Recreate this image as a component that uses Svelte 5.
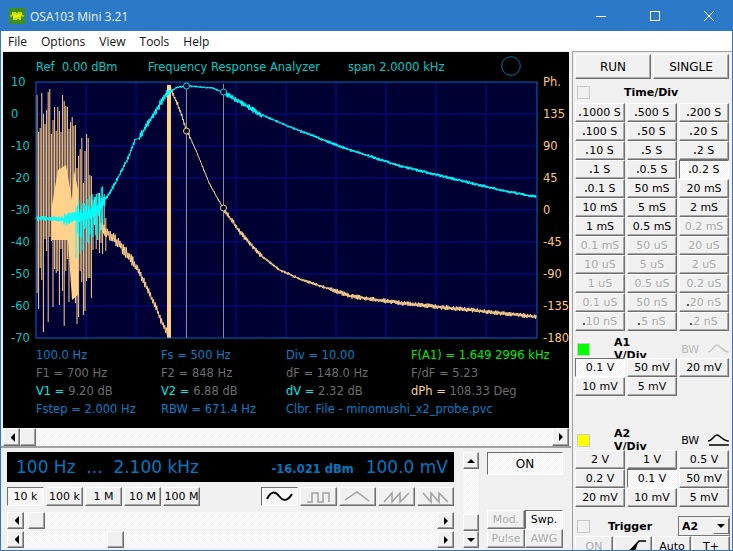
<script>
  // seeded noise so the traces are the same on every load
  let seed = 12345;
  function rnd() {
    seed = (seed * 16807) % 2147483647;
    return seed / 2147483647;
  }
  function lerp(pts, x) {
    for (let i = 1; i < pts.length; i++) {
      if (x <= pts[i][0]) {
        const a = pts[i - 1], b = pts[i];
        return a[1] + ((b[1] - a[1]) * (x - a[0])) / (b[0] - a[0]);
      }
    }
    return pts[pts.length - 1][1];
  }

  const cyanPts = [[36,218],[64,219],[84,216],[100,207],[107,197],[117,180],[128,158],[135,140],[139,138],[152,117],[167,93],[178,87],[187,86],[200,87],[212,88],[223,92],[240,102],[260,114],[290,127],[350,150],[400,166],[450,178],[500,190],[537,197]];
  const orangePts = [[100,226],[110,235],[120,245],[130,258],[136,266],[145,284],[155,305],[163,325],[170,337]];
  const phasePts = [[168,84],[178,105],[187,131],[195,148],[210,185],[223,208],[240,232],[260,255],[280,270],[300,279],[350,296],[400,303],[450,308],[500,313],[537,317]];

  function zigzag(pts, from, to, step, amp) {
    let out = [];
    let sign = 1;
    for (let x = from; x <= to; x += step) {
      const y = lerp(pts, x) + sign * amp(x) * (0.35 + rnd() * 0.65);
      out.push(x.toFixed(1) + "," + y.toFixed(1));
      sign = -sign;
    }
    return out.join(" ");
  }

  const cyanAmp = (x) => {
    if (x < 64) return 2.5;
    if (x < 84) return 7;
    if (x < 106) return 7;
    if (x < 135) return 2.5;
    if (x < 139) return 0.4;
    if (x < 170) return 4;
    if (x < 225) return 1;
    if (x < 262) return 3;
    if (x < 300) return 1.2;
    return 1.6;
  };
  const phaseAmp = (x) => {
    if (x < 190) return 2.5;
    if (x < 223) return 1.2;
    if (x < 262) return 2.8;
    if (x < 330) return 1.5;
    return 2.4;
  };

  const cyanTrace = zigzag(cyanPts, 36, 537, 0.7, cyanAmp);
  const lowTrace = zigzag(orangePts, 100, 170, 0.8, (x) => (x < 136 ? 6 : 4));
  const phaseTrace = zigzag(phasePts, 170, 537, 0.7, phaseAmp);

  // left part of the plot: spikes of the unsettled phase reading
  function spikes() {
    let d = "";
    for (let x = 37; x < 106; x += 1.6) {
      let top, bot;
      if (x < 76) {
        top = 88 + rnd() * (x < 50 ? 60 : 50);
        bot = 235 + rnd() * 100;
      } else if (x < 92) {
        top = 130 + rnd() * 60;
        bot = 260 + rnd() * 75;
      } else {
        top = 190 + rnd() * 30;
        bot = 225 + rnd() * 30;
      }
      d += `M${x.toFixed(1)} ${top.toFixed(0)}V${bot.toFixed(0)}`;
    }
    return d;
  }
  const spikePath = spikes();

  function cyanDrops() {
    let d = "";
    for (let x = 76; x < 104; x += 1.4) {
      const len = x < 92 ? 12 + rnd() * 30 : 8 + rnd() * 28;
      d += `M${x.toFixed(1)} ${lerp(cyanPts, x) - 6 - rnd() * 12}V${(lerp(cyanPts, x) + len).toFixed(0)}`;
    }
    return d;
  }
  const cyanDropPath = cyanDrops();

  const vGrid = [86, 136, 186, 236, 286, 336, 386, 436, 486];
  const hGrid = [114, 146, 178, 210, 242, 274, 306];
  const dbLabels = [["10", 82], ["0", 114], ["-10", 146], ["-20", 178], ["-30", 210], ["-40", 242], ["-50", 274], ["-60", 306], ["-70", 338]];
  const phLabels = [["135", 114], ["90", 146], ["45", 178], ["0", 210], ["-45", 242], ["-90", 274], ["-135", 306], ["-180", 338]];

  // m = small mark in front of the caption, off = greyed out
  const timeDiv = [
    ["1000 S", "m"], ["500 S", "m"], ["200 S", "m"],
    ["100 S", "m"], ["50 S", "m"], ["20 S", "m"],
    ["10 S", "m"], ["5 S", "m"], ["2 S", "m"],
    ["1 S", "m"], ["0.5 S", "m"], ["0.2 S", "m on"],
    ["0.1 S", "m"], ["50 mS", ""], ["20 mS", ""],
    ["10 mS", ""], ["5 mS", ""], ["2 mS", ""],
    ["1 mS", ""], ["0.5 mS", ""], ["0.2 mS", "off"],
    ["0.1 mS", "off"], ["50 uS", "off"], ["20 uS", "off"],
    ["10 uS", "off"], ["5 uS", "off"], ["2 uS", "off"],
    ["1 uS", "off"], ["0.5 uS", "off"], ["0.2 uS", "off"],
    ["0.1 uS", "off"], ["50 nS", "off"], ["20 nS", "m off"],
    ["10 nS", "m off"], ["5 nS", "m off"], ["2 nS", "m off"]
  ];
  const a1Div = [["0.1 V", "on"], ["50 mV", ""], ["20 mV", ""], ["10 mV", ""], ["5 mV", ""]];
  const a2Div = [["2 V", ""], ["1 V", ""], ["0.5 V", ""], ["0.2 V", ""], ["0.1 V", "on"], ["50 mV", ""], ["20 mV", ""], ["10 mV", ""], ["5 mV", ""]];
  const ranges = ["10 k", "100 k", "1 M", "10 M", "100 M"];
  const waves = [
    "M4 11 C8 3 12 3 16 8 S24 14 29 6",
    "M5 14H10V5H16V14H21V5H27V14",
    "M4 12L16 4L28 13",
    "M4 14L12 5V14L20 5V14L29 5",
    "M4 5L12 14V5L20 14V5L29 14"
  ];
</script>

{#snippet dbtn(label, flags)}
  <button class="btn {flags}">
    {#if flags.includes("m")}<i class="mark"></i>{/if}{label}
  </button>
{/snippet}

{#snippet hbar(cls)}
  <div class="hbar {cls}">
    <span class="arrow-btn"><i class="tri left"></i></span>
    <span class="thumb"></span>
    <span class="arrow-btn end"><i class="tri right"></i></span>
  </div>
{/snippet}

<div class="window">
  <header class="titlebar">
    <svg class="appicon" viewBox="0 0 16 16" width="16" height="16">
      <rect width="16" height="16" fill="#3f8f1e" />
      <path d="M1 8H3L4 4L5 12L6 4L7 12L8 5L9 11L10 4L11 12L12 4L13 8H15" fill="none" stroke="#f4f400" stroke-width="1" />
    </svg>
    <span class="title">OSA103 Mini 3.21</span>
    <div class="controls">
      <svg width="10" height="10" viewBox="0 0 10 10"><path d="M0 5.5H10" stroke="#fff" /></svg>
      <svg width="10" height="10" viewBox="0 0 10 10"><rect x=".5" y=".5" width="9" height="9" fill="none" stroke="#fff" /></svg>
      <svg width="10" height="10" viewBox="0 0 10 10"><path d="M0 0L10 10M10 0L0 10" stroke="#fff" /></svg>
    </div>
  </header>

  <nav class="menu">
    <span>File</span><span>Options</span><span>View</span><span>Tools</span><span>Help</span>
  </nav>

  <div class="main">
    <div class="left">
      <section class="scope">
        <div class="scope-head">
          <span class="h-ref">Ref&nbsp; 0.00 dBm</span>
          <span class="h-mode">Frequency Response Analyzer</span>
          <span class="h-span">span 2.0000 kHz</span>
          <svg class="h-led" width="20" height="20" viewBox="0 0 20 20"><circle cx="10" cy="10" r="9.3" fill="none" stroke="#0a6f9a" /></svg>
        </div>

        <svg class="plot" width="566" height="272" viewBox="3 74 566 272">
          <rect x="36" y="82" width="501" height="256" fill="#000033" />
          {#each vGrid as x}
            <line x1={x} x2={x} y1="82" y2="338" stroke="#000f96" />
          {/each}
          {#each hGrid as y}
            <line x1="36" x2="537" y1={y} y2={y} stroke="#000f96" />
          {/each}

          <path d={spikePath} stroke="#ffd28c" stroke-width="1" fill="none" />
          <path d="M52 205L58 170L66 165L72 200L74 170L78 190V295L72 300L68 240L52 240Z" fill="#ffd28c" />
          <rect x="167" y="85" width="4" height="253" fill="#ffd28c" />
          <polyline points={lowTrace} fill="none" stroke="#ffd28c" />
          <polyline points={phaseTrace} fill="none" stroke="#ffd28c" />

          <path d={cyanDropPath} stroke="#00ffff" stroke-width="1" fill="none" />
          <polyline points={cyanTrace} fill="none" stroke="#00ffff" />

          <rect x="36" y="82" width="501" height="256" fill="none" stroke="#0a64c8" />
          <line x1="186.5" x2="186.5" y1="84" y2="338" stroke="#8c8c8c" />
          <line x1="223.5" x2="223.5" y1="84" y2="338" stroke="#8c8c8c" />
          <circle cx="186.5" cy="86" r="3" fill="#000033" stroke="#00e0e0" />
          <circle cx="223.5" cy="92" r="3" fill="#000033" stroke="#00e0e0" />
          <circle cx="186.5" cy="131" r="3" fill="#000033" stroke="#ffd28c" />
          <circle cx="223.5" cy="208" r="3" fill="#000033" stroke="#ffd28c" />

          {#each dbLabels as [t, y]}
            <text x="11" y={y + 4} class="axis-l">{t}</text>
          {/each}
          <text x="543" y="86" class="axis-r">Ph.</text>
          {#each phLabels as [t, y]}
            <text x="543" y={y + 4} class="axis-r">{t}</text>
          {/each}
        </svg>

        <div class="readout">
          <span>100.0 Hz</span><span>Fs = 500 Hz</span><span>Div = 10.00</span><span class="green">F(A1) = 1.649 2996 kHz</span>
          <span class="gray">F1 = 700 Hz</span><span class="gray">F2 = 848 Hz</span><span class="gray">dF = 148.0 Hz</span><span class="gray">F/dF = 5.23</span>
          <span class="gray"><b class="cy">V1 =</b> 9.20 dB</span><span class="gray"><b class="cy">V2 =</b> 6.88 dB</span><span class="gray"><b class="cy">dV =</b> 2.32 dB</span><span class="gray"><b class="or">dPh =</b> 108.33 Deg</span>
          <span>Fstep = 2.000 Hz</span><span>RBW = 671.4 Hz</span><span class="wide">Clbr. File - minomushi_x2_probe.pvc</span>
        </div>
      </section>

      {@render hbar("top-bar")}

      <section class="gen">
        <div class="gen-left">
          <div class="display">
            <span class="big">100 Hz&nbsp; ...&nbsp; 2.100 kHz</span>
            <span class="dbm">-16.021 dBm</span>
            <span class="big mv">100.0 mV</span>
          </div>
          <div class="gen-row">
            <div class="group">
              {#each ranges as r, i}
                <button class="btn r {i === 0 ? 'on' : ''}">{r}</button>
              {/each}
            </div>
            <div class="group">
              {#each waves as d, i}
                <button class="btn r {i === 0 ? 'on' : ''}" aria-label="wave {i}">
                  <svg width="33" height="18" viewBox="0 0 33 18">
                    <path d={d} fill="none" stroke={i === 0 ? "#000" : "#a0a0a0"} stroke-width={i === 0 ? 2 : 1.5} />
                  </svg>
                </button>
              {/each}
            </div>
          </div>
          {@render hbar("s1")}
          {@render hbar("s2")}
        </div>

        <div class="vbar">
          <span class="arrow-btn v"><i class="tri up"></i></span>
          <span class="vthumb"></span>
          <span class="arrow-btn v"><i class="tri down"></i></span>
        </div>

        <div class="gen-right">
          <button class="btn on onbtn">ON</button>
          <div class="modes">
            <button class="btn off">Mod.</button>
            <button class="btn on">Swp.</button>
            <button class="btn off">Pulse</button>
            <button class="btn off">AWG</button>
          </div>
        </div>
      </section>
    </div>

    <aside class="panel">
      <div class="runrow">
        <button class="btn big-btn">RUN</button>
        <button class="btn big-btn">SINGLE</button>
      </div>

      <div class="sechead time">
        <span class="box"></span><b>Time/Div</b>
      </div>
      <div class="grid3">
        {#each timeDiv as [label, flags]}
          {@render dbtn(label, flags)}
        {/each}
      </div>

      <div class="sechead a1">
        <span class="box green-box"></span><b>A1 V/Div</b>
        <span class="bw dim">BW</span>
        <svg width="22" height="12" viewBox="0 0 22 12"><path d="M0 9C4 9 6 2 9 2S15 9 21 9" fill="none" stroke="#c4c4c4" stroke-width="1.5" /></svg>
      </div>
      <div class="grid3">
        {#each a1Div as [label, flags]}
          {@render dbtn(label, flags)}
        {/each}
      </div>

      <div class="sechead a2">
        <span class="box yellow-box"></span><b>A2 V/Div</b>
        <span class="bw">BW</span>
        <svg width="22" height="12" viewBox="0 0 22 12"><path d="M0 7C4 7 6 1 9 1S15 7 21 7M1 11H21" fill="none" stroke="#000" stroke-width="1.5" /></svg>
      </div>
      <div class="grid3">
        {#each a2Div as [label, flags]}
          {@render dbtn(label, flags)}
        {/each}
      </div>

      <div class="trigger">
        <span class="box"></span><b>Trigger</b>
        <div class="select"><b>A2</b><span class="drop"><i class="tri down"></i></span></div>
      </div>
      <div class="trigrow">
        <button class="btn off w1">ON</button>
        <button class="btn w1" aria-label="edge">
          <svg width="30" height="14" viewBox="0 0 30 14">
            <path d="M2 13H11L21 2H28" fill="none" stroke="#000" stroke-width="1.5" />
            <path d="M10 12L20 4L17 12Z" fill="#000" />
          </svg>
        </button>
        <button class="btn w1">Auto</button>
        <button class="btn w1">T+</button>
      </div>
    </aside>
  </div>
</div>

<style>
  :global(body) {
    margin: 0;
    overflow: hidden;
  }

  .window {
    width: 733px;
    height: 551px;
    box-sizing: border-box;
    display: flex;
    flex-direction: column;
    background: #f0f0f0;
    border: 1px solid #2b79c7;
    font-family: "DejaVu Sans", sans-serif;
    font-size: 11px;
    color: #000;
    overflow: hidden;
  }

  .titlebar {
    height: 30px;
    flex: none;
    background: #2b79c7;
    display: flex;
    align-items: center;
    color: #fff;
    padding-left: 8px;
  }
  .appicon { margin-right: 5px; }
  .title {
    font-family: "Open Sans", sans-serif;
    font-size: 12px;
    opacity: .92;
  }
  .controls {
    margin-left: auto;
    display: flex;
    width: 136px;
    justify-content: space-between;
    padding-right: 18px;
    box-sizing: border-box;
  }

  .menu {
    height: 20px;
    flex: none;
    background: #fff;
    display: flex;
    align-items: center;
    gap: 14px;
    padding-left: 7px;
    font-family: "Open Sans", sans-serif;
    font-size: 12px;
    color: #111;
  }

  .main {
    flex: 1;
    display: flex;
    min-height: 0;
  }

  .left {
    width: 570px;
    flex: none;
    padding-left: 2px;
    padding-top: 1px;
    box-sizing: border-box;
  }

  .scope {
    width: 566px;
    height: 376px;
    background: #000;
    font-family: "DejaVu Sans", sans-serif;
    font-size: 11.5px;
  }
  .scope-head {
    height: 22px;
    display: flex;
    align-items: flex-end;
    padding-left: 33px;
    color: #00c8c8;
    position: relative;
  }
  .h-ref { width: 112px; }
  .h-mode { width: 200px; }
  .h-span { width: 140px; }
  .h-led { position: absolute; left: 498px; top: 4px; }

  .plot { display: block; }
  .axis-l { fill: #00c8c8; font-size: 11.5px; }
  .axis-r { fill: #ffc878; font-size: 11.5px; }

  .readout {
    display: grid;
    grid-template-columns: repeat(4, 125px);
    grid-auto-rows: 18px;
    padding-left: 33px;
    align-items: center;
    color: #0080c8;
    white-space: nowrap;
  }
  .readout .gray { color: #6e6e6e; }
  .readout .green { color: #00ee00; }
  .readout b { font-weight: normal; }
  .cy { color: #00e8e8; }
  .or { color: #ffd28c; }
  .wide { grid-column: span 2; }

  .hbar {
    display: flex;
    height: 18px;
    background: repeating-conic-gradient(#fff 0 25%, #f0f0f0 0 50%) 0 0 / 2px 2px;
  }
  .top-bar { width: 566px; }
  .s1 { width: 447px; height: 17px; margin-top: 6px; }
  .s2 { width: 447px; height: 17px; margin-top: 2px; }

  .arrow-btn, .thumb, .vthumb {
    background: #f0f0f0;
    border: 1px solid;
    border-color: #fff #6e6e6e #6e6e6e #fff;
    box-shadow: inset -1px -1px 0 #a0a0a0;
    box-sizing: border-box;
    flex: none;
  }
  .arrow-btn {
    width: 17px;
    display: flex;
    align-items: center;
    justify-content: center;
  }
  .arrow-btn.end { margin-left: auto; }
  .thumb { width: 17px; }
  .top-bar .thumb { width: 16px; }
  .s1 .thumb { margin-left: 4px; }
  .s2 .thumb { margin-left: 83px; }

  .tri { width: 0; height: 0; display: block; border: 4px solid transparent; }
  .tri.left { border-right-color: #000; border-left-width: 0; }
  .tri.right { border-left-color: #000; border-right-width: 0; }
  .tri.up { border-bottom-color: #000; border-top-width: 0; }
  .tri.down { border-top-color: #000; border-bottom-width: 0; }

  .gen {
    display: flex;
    border-top: 2px solid #a0a0a0;
    padding-top: 4px;
    padding-left: 3px;
    margin-left: -2px;
  }
  .gen-left { width: 447px; flex: none; margin-left: 3px; }
  .display {
    height: 30px;
    background: #000;
    color: #0078c0;
    display: flex;
    align-items: center;
    padding: 0 6px 0 9px;
  }
  .big { font-size: 17px; }
  .dbm {
    margin-left: auto;
    font-weight: bold;
    font-size: 11.5px;
    font-family: "DejaVu Sans", sans-serif;
    margin-right: 12px;
    margin-top: 3px;
  }
  .gen-row {
    display: flex;
    justify-content: space-between;
    margin-top: 5px;
  }
  .group { display: flex; gap: 2px; }

  .btn {
    margin: 0;
    padding: 0;
    height: 19px;
    font: inherit;
    background: #f0f0f0;
    color: #000;
    border: 1px solid;
    border-color: #fff #6e6e6e #6e6e6e #fff;
    box-shadow: inset -1px -1px 0 #a8a8a8;
    white-space: nowrap;
    display: flex;
    align-items: center;
    justify-content: center;
    box-sizing: border-box;
  }
  .btn.r { width: 37px; }
  .btn.off { color: #a6a6a6; text-shadow: 1px 1px 0 #fff; }
  .btn.on {
    border-color: #6e6e6e #fff #fff #6e6e6e;
    box-shadow: none;
    background: repeating-conic-gradient(#fff 0 25%, #f0f0f0 0 50%) 0 0 / 2px 2px;
  }
  .mark {
    width: 2px;
    height: 2px;
    background: #555;
    display: inline-block;
    margin: 5px 1px 0 0;
  }

  .vbar {
    width: 16px;
    flex: none;
    margin-left: 9px;
    display: flex;
    flex-direction: column;
    height: 96px;
    background: repeating-conic-gradient(#fff 0 25%, #f0f0f0 0 50%) 0 0 / 2px 2px;
  }
  .arrow-btn.v { width: 16px; height: 17px; }
  .vthumb { width: 16px; height: 17px; margin-top: auto; }

  .gen-right {
    width: 76px;
    flex: none;
    margin-left: 8px;
    display: flex;
    flex-direction: column;
    height: 96px;
  }
  .onbtn { height: 23px; font-size: 12px; }
  .modes {
    margin-top: auto;
    display: grid;
    grid-template-columns: 1fr 1fr;
  }
  .modes .btn { width: 38px; }

  .panel {
    width: 160px;
    margin-left: 1px;
    box-sizing: border-box;
    border-left: 1px solid #a0a0a0;
    border-top: 1px solid #a0a0a0;
    padding: 2px 2px 0 2px;
  }
  .runrow { display: flex; gap: 2px; }
  .big-btn { width: 76px; height: 25px; font-size: 12px; }

  .sechead {
    display: flex;
    align-items: center;
    height: 14px;
    padding-left: 2px;
  }
  .sechead b, .trigger > b { font-size: 11px; }
  .time { margin: 6px 0 4px; }
  .time b { margin-left: 34px; }
  .a1 { margin: 11px 0 2px; }
  .a2 { margin: 37px 0 3px; }
  .a1 b, .a2 b { margin-left: 24px; }
  .box {
    width: 11px;
    height: 11px;
    border: 1px solid #c8c8c8;
    flex: none;
  }
  .green-box { background: #00ff00; border-color: #c8c8c8; }
  .yellow-box { background: #ffff00; border-color: #c8c8c8; }
  .bw { margin-left: 15px; margin-right: 9px; }
  .dim { color: #b8b8b8; }

  .grid3 {
    display: grid;
    grid-template-columns: repeat(3, 50px);
    gap: 0 2px;
    grid-auto-rows: 19px;
  }
  .grid3 .btn { width: 50px; }

  .trigger {
    display: flex;
    align-items: center;
    height: 20px;
    margin-top: 9px;
    padding-left: 2px;
  }
  .trigger > b { margin-left: 18px; }
  .select {
    margin-left: auto;
    width: 52px;
    height: 20px;
    box-sizing: border-box;
    border: 1px solid #777;
    display: flex;
    align-items: center;
    justify-content: space-between;
    padding-left: 3px;
  }
  .drop {
    width: 16px;
    height: 16px;
    background: #f0f0f0;
    border: 1px solid;
    border-color: #fff #6e6e6e #6e6e6e #fff;
    box-sizing: border-box;
    display: flex;
    align-items: center;
    justify-content: center;
  }
  .trigrow { display: flex; gap: 1px; }
  .w1 { width: 38px; height: 20px; }
</style>
